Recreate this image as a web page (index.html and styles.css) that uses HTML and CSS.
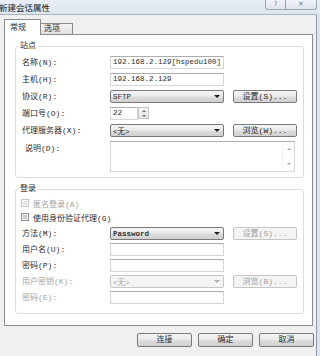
FILE: index.html
```html
<!DOCTYPE html>
<html lang="zh-CN">
<head>
	<meta charset="UTF-8">
	<title>新建会话属性</title>
	<link rel="stylesheet" href="styles.css">
</head>
<body>
<div class="window">

	<!-- Title bar -->
	<header class="titlebar">
		<span class="title">新建会话属性</span>
		<div class="caption">
			<span class="cap-btn help">?</span>
			<span class="cap-btn close">✕</span>
		</div>
	</header>

	<div class="client">

		<!-- Tabs -->
		<div class="tabs">
			<span class="tab active">常规</span>
			<span class="tab">选项</span>
		</div>

		<div class="panel">

			<!-- Site -->
			<fieldset class="group site">
				<legend>站点</legend>
				<div class="rows site-rows">
					<label>名称(N):</label>
					<div class="field">192.168.2.129[hspedu100]</div>
					<span></span>

					<label>主机(H):</label>
					<div class="field">192.168.2.129</div>
					<span></span>

					<label>协议(R):</label>
					<div class="combo"><span>SFTP</span><i class="arrow"></i></div>
					<button class="btn">设置(S)...</button>

					<label>端口号(O):</label>
					<div class="port">
						<div class="field">22</div>
						<div class="spin"><i class="up"></i><i class="down"></i></div>
					</div>
					<span></span>

					<label>代理服务器(X):</label>
					<div class="combo"><span>&lt;无&gt;</span><i class="arrow"></i></div>
					<button class="btn">浏览(W)...</button>

					<label class="memo-label">说明(D):</label>
					<div class="memo">
						<div class="scroll"><i class="up light"></i><i class="down light"></i></div>
					</div>
				</div>
			</fieldset>

			<!-- Login -->
			<fieldset class="group login">
				<legend>登录</legend>
				<div class="checks">
					<div class="check disabled"><span class="box"></span>匿名登录(A)</div>
					<div class="check"><span class="box"></span>使用身份验证代理(G)</div>
				</div>
				<div class="rows login-rows">
					<label>方法(M):</label>
					<div class="combo strong"><span>Password</span><i class="arrow"></i></div>
					<button class="btn" disabled>设置(S)...</button>

					<label>用户名(U):</label>
					<div class="field"></div>
					<span></span>

					<label>密码(P):</label>
					<div class="field"></div>
					<span></span>

					<label class="off">用户密钥(K):</label>
					<div class="combo" data-disabled="1"><span>&lt;无&gt;</span><i class="arrow"></i></div>
					<button class="btn" disabled>浏览(B)...</button>

					<label class="off">密码(E):</label>
					<div class="field"></div>
					<span></span>
				</div>
			</fieldset>

		</div>

		<!-- Dialog buttons -->
		<div class="footer">
			<button class="btn">连接</button>
			<button class="btn">确定</button>
			<button class="btn">取消</button>
		</div>

	</div>
</div>
</body>
</html>
```

FILE: styles.css
```css
* {
	box-sizing: border-box;
}

html,
body {
	width: 320px;
	height: 356px;
	margin: 0;
	overflow: hidden;
}

body {
	background: #dbe4ee;
	font-family: "Liberation Mono", "Noto Sans CJK SC", monospace;
	font-size: 8px;
	color: #2a2a2a;
}

.window {
	width: 320px;
	height: 356px;
	display: flex;
	flex-direction: column;
}

/* Title bar */

.titlebar {
	height: 14px;
	flex: none;
	display: flex;
	justify-content: space-between;
	align-items: flex-start;
	padding-right: 3px;
	background: linear-gradient(#e9eef4, #dde5ee);
}

.title {
	margin-left: -1px;
	font-family: "Noto Sans CJK SC", sans-serif;
	font-size: 8.5px;
	line-height: 14px;
	color: #1a1a1a;
}

.caption {
	display: flex;
}

.cap-btn {
	height: 10px;
	border: 1px solid #9ba6b3;
	border-top: none;
	background: linear-gradient(#f1f4f8, #dee5ed);
	color: #7a838e;
	font-family: "DejaVu Sans", sans-serif;
	font-size: 7px;
	line-height: 9px;
	text-align: center;
}

.help {
	width: 21px;
	border-radius: 0 0 0 3px;
}

.close {
	width: 31px;
	border-left: none;
	border-radius: 0 0 3px 0;
}

/* Client area */

.client {
	flex: 1;
	width: 317px;
	display: flex;
	flex-direction: column;
	background: #f0f0f0;
	border-top: 1px solid #aab6c4;
	border-right: 1px solid #8d9aaa;
}

.tabs {
	height: 19px;
	flex: none;
	display: flex;
	align-items: flex-end;
	padding-left: 4px;
}

.tab {
	position: relative;
	height: 11px;
	width: 32px;
	padding-left: 3px;
	border: 1px solid #898c95;
	border-bottom: none;
	border-left: none;
	background: linear-gradient(#f4f4f4, #e0e0e0);
	line-height: 10px;
}

.tab.active {
	z-index: 1;
	height: 16px;
	width: 37px;
	margin-bottom: -1px;
	padding-left: 5px;
	border-left: 1px solid #898c95;
	background: #fff;
	line-height: 15px;
}

.panel {
	width: 309px;
	margin-left: 4px;
	padding: 6px 0 11px 10px;
	background: #fff;
	border: 1px solid #898c95;
}

/* Group boxes */

.group {
	width: 289px;
	min-width: 0;
	margin: 0;
	padding: 5px 0 5px 2px;
	border: 1px solid #d5dfe5;
	border-radius: 3px;
}

.group legend {
	height: 10px;
	padding: 0 2px;
	line-height: 10px;
}

.login {
	margin-top: 6px;
	padding-top: 2px;
	padding-bottom: 9px;
}

.rows {
	display: grid;
	grid-template-columns: 79px 114px 64px;
	column-gap: 9px;
	margin-left: 4px;
}

.site-rows {
	grid-template-rows: repeat(5, 13px) 31px;
	row-gap: 4px;
}

.login-rows {
	grid-auto-rows: 13px;
	row-gap: 3px;
}

.rows label {
	line-height: 13px;
	white-space: nowrap;
}

.rows label.off {
	color: #a3a3a3;
}

.memo-label {
	align-self: start;
	margin-top: 1px;
	padding-left: 3px;
}

/* Controls */

.field {
	height: 13px;
	padding-left: 2px;
	background: #fff;
	border: 1px solid #d3d7dc;
	border-top-color: #abadb3;
	font-size: 7.5px;
	line-height: 11px;
	white-space: nowrap;
	overflow: hidden;
}

.combo {
	height: 13px;
	display: flex;
	justify-content: space-between;
	align-items: center;
	padding: 0 3px 0 2px;
	border: 1px solid #7a7a7a;
	border-radius: 2px;
	background: linear-gradient(#f4f4f4, #ebebeb 45%, #dcdcdc 55%, #d0d0d0);
	font-size: 7.5px;
}

.combo.strong span {
	font-weight: bold;
	color: #333;
}

.combo[data-disabled] {
	border-color: #c3c7ca;
	background: #f4f4f4;
	color: #a3a3a3;
}

.arrow {
	width: 0;
	height: 0;
	border-left: 3px solid transparent;
	border-right: 3px solid transparent;
	border-top: 3px solid #1e1e1e;
}

.combo[data-disabled] .arrow {
	border-top-color: #b0b0b0;
}

.btn {
	height: 13px;
	padding: 0;
	border: 1px solid #7a7a7a;
	border-radius: 2px;
	background: linear-gradient(#f4f4f4, #ebebeb 45%, #dddddd 55%, #cfcfcf);
	font-family: inherit;
	font-size: 8px;
	line-height: 11px;
	color: #2a2a2a;
}

.btn:disabled {
	border-color: #c3c7ca;
	background: #f4f4f4;
	color: #a0a0a0;
}

.port {
	display: flex;
	width: 39px;
}

.port .field {
	width: 28px;
}

.spin {
	width: 11px;
	height: 12px;
	display: flex;
	flex-direction: column;
	align-items: center;
	justify-content: space-around;
	border: 1px solid #c3c7ca;
	background: linear-gradient(#f6f6f6, #e4e4e4);
}

.up,
.down {
	width: 0;
	height: 0;
	border-left: 2px solid transparent;
	border-right: 2px solid transparent;
}

.up {
	border-bottom: 2px solid #6d6d6d;
}

.down {
	border-top: 2px solid #6d6d6d;
}

.up.light {
	border-bottom-color: #a8a8a8;
}

.down.light {
	border-top-color: #a8a8a8;
}

.memo {
	grid-column: 2 / 4;
	width: 185px;
	display: flex;
	justify-content: flex-end;
	background: #fff;
	border: 1px solid #d3d7dc;
	border-top-color: #abadb3;
}

.scroll {
	width: 12px;
	display: flex;
	flex-direction: column;
	justify-content: space-between;
	align-items: center;
	padding: 6px 0 6px;
	border-left: 1px solid #f0f0f0;
}

/* Check boxes */

.checks {
	margin: 0 0 3px 3px;
}

.check {
	height: 14px;
	display: flex;
	align-items: center;
	gap: 4px;
}

.check.disabled {
	color: #a3a3a3;
}

.box {
	width: 8px;
	height: 8px;
	border: 1px solid #8e8f8f;
	background: #f2f2f2;
	box-shadow: inset 0 0 0 1px #f4f4f4, inset 0 0 0 3px #c9cbcd;
}

.check.disabled .box {
	border-color: #c3c7ca;
	box-shadow: inset 0 0 0 1px #fafafa, inset 0 0 0 3px #e6e6e6;
}

/* Dialog buttons */

.footer {
	display: flex;
	justify-content: flex-end;
	gap: 6px;
	padding: 7px 2px 0 0;
}

.footer .btn {
	width: 55px;
	height: 14px;
	line-height: 12px;
}
```
